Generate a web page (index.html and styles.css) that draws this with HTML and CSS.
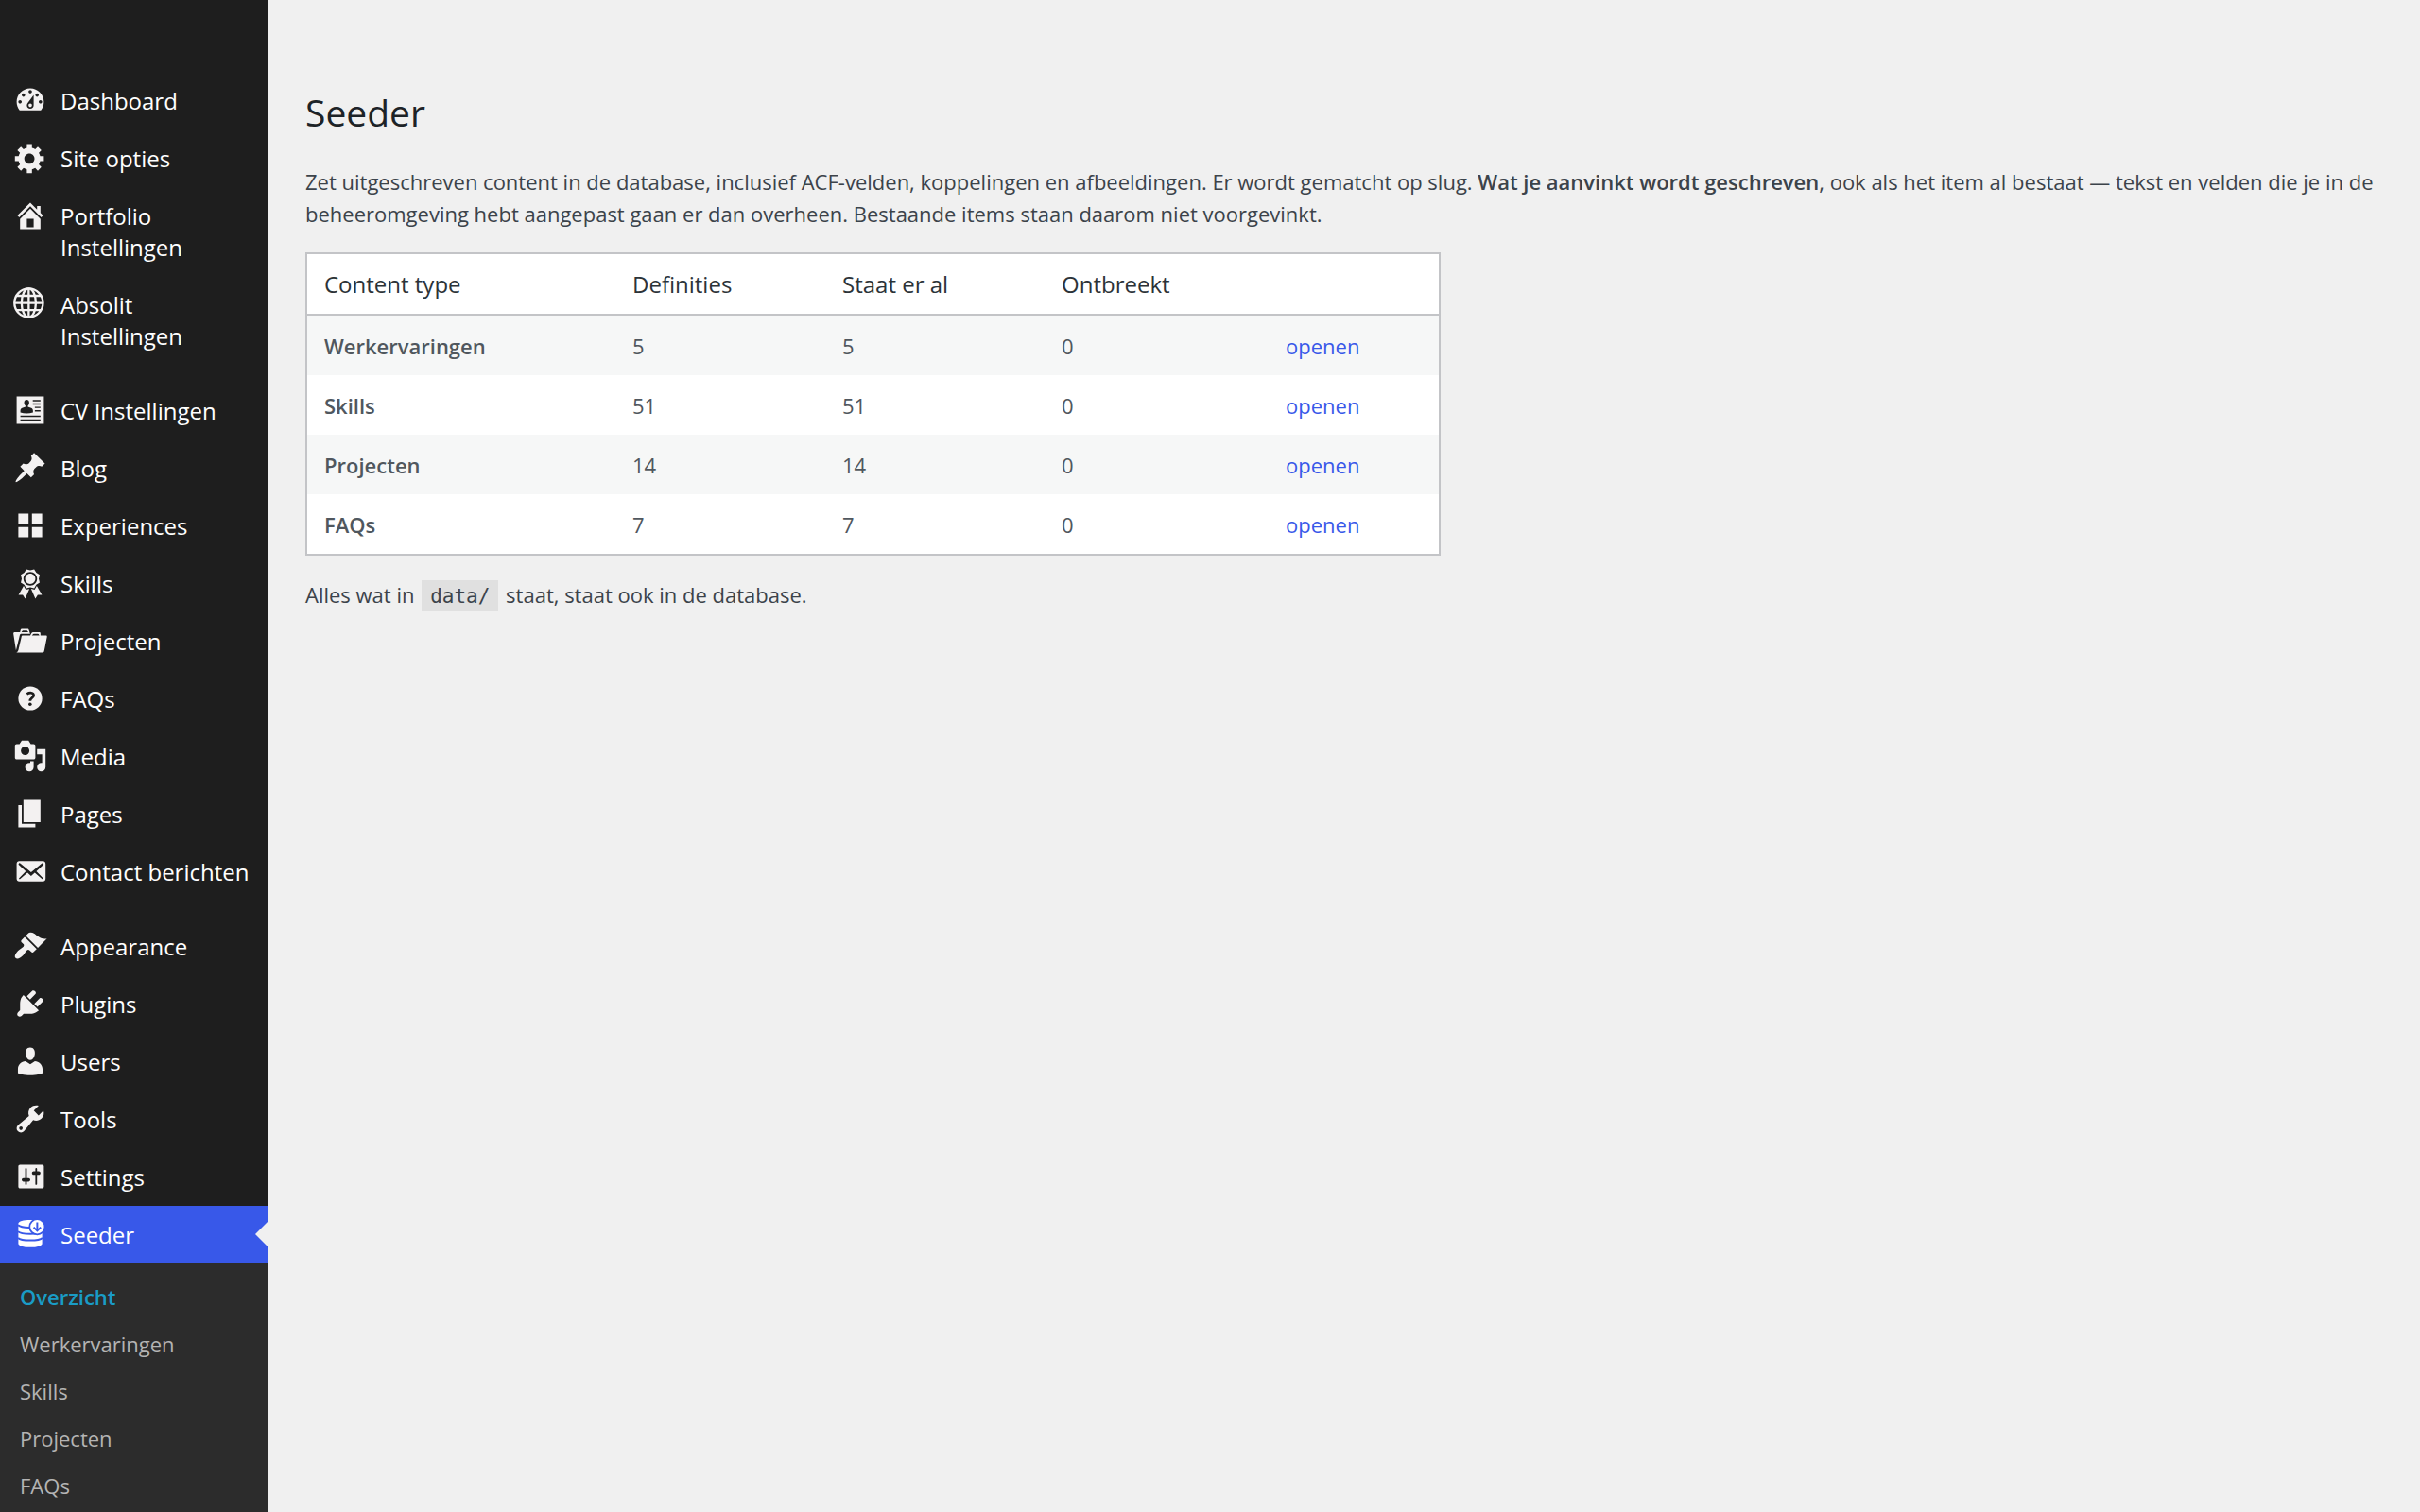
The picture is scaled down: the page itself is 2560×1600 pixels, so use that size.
FILE: index.html
```html
<!doctype html>
<html lang="nl">
  <head>
    <meta charset="utf-8">
    <meta name="viewport" content="width=device-width">
    <title>Seeder</title>
    <link rel="stylesheet" href="styles.css">
  </head>
  <body>
    <nav class="adminmenu">
      <ul class="menu">
        <li><a class="menu-item" href="#dashboard">
          <svg class="icon" viewBox="0 0 20 20"><path d="M3.76 16h12.48c1.1-1.37 1.76-3.11 1.76-5 0-4.42-3.58-8-8-8s-8 3.58-8 8c0 1.89.66 3.63 1.76 5zM10 4c.55 0 1 .45 1 1s-.45 1-1 1-1-.45-1-1 .45-1 1-1zM6 6c.55 0 1 .45 1 1s-.45 1-1 1-1-.45-1-1 .45-1 1-1zm8 0c.55 0 1 .45 1 1s-.45 1-1 1-1-.45-1-1 .45-1 1-1zm-5.37 5.55L12 7v6c0 1.1-.9 2-2 2s-2-.9-2-2c0-.57.24-1.08.63-1.45zM4 10c.55 0 1 .45 1 1s-.45 1-1 1-1-.45-1-1 .45-1 1-1zm12 0c.55 0 1 .45 1 1s-.45 1-1 1-1-.45-1-1 .45-1 1-1zm-5 3c0-.55-.45-1-1-1s-1 .45-1 1 .45 1 1 1 1-.45 1-1z"/></svg>
          <span>Dashboard</span></a></li>
        <li><a class="menu-item" href="#site-opties">
          <svg class="icon" viewBox="0 0 20 20"><path d="M18 12h-2.18c-.17.7-.44 1.35-.81 1.93l1.54 1.54-2.1 2.1-1.54-1.54c-.58.36-1.23.63-1.91.79V19H8v-2.18c-.68-.16-1.33-.43-1.91-.79l-1.54 1.54-2.12-2.12 1.54-1.54c-.36-.58-.63-1.23-.79-1.91H1V9.03h2.17c.16-.7.44-1.35.8-1.94L2.43 5.55l2.1-2.1 1.54 1.54c.58-.37 1.24-.64 1.93-.81V2h3v2.18c.68.16 1.33.43 1.91.79l1.54-1.54 2.12 2.12-1.54 1.54c.36.59.64 1.24.8 1.94H18V12zm-8.5 1.5c1.66 0 3-1.34 3-3s-1.34-3-3-3-3 1.34-3 3 1.34 3 3 3z"/></svg>
          <span>Site opties</span></a></li>
        <li><a class="menu-item" href="#portfolio">
          <svg class="icon" viewBox="0 0 20 20"><path d="M16 8.5l1.53 1.53-1.06 1.06L10 4.6l-6.47 6.49-1.06-1.06L10 2.5l4 4v-2h2v4zm-6-2.46l6 5.99V18H4v-5.97zM12 17v-5H8v5h4z"/></svg>
          <span>Portfolio Instellingen</span></a></li>
        <li><a class="menu-item" href="#absolit">
          <svg class="icon" viewBox="0 0 20 20"><g class="line"><circle cx="9.1" cy="9.2" r="8.4"/><ellipse cx="9.1" cy="9.2" rx="4.2" ry="8.4"/><path d="M9.1.8v16.8M.7 9.2h16.8M2 5h14.2M2 13.4h14.2"/></g></svg>
          <span>Absolit Instellingen</span></a></li>
        <li class="separator"></li>
        <li><a class="menu-item" href="#cv">
          <svg class="icon" viewBox="0 0 20 20"><path d="M2 2h16v16H2zM7.9 3.9c-.9 0-1.5.7-1.5 1.7 0 .8.3 1.5.8 1.9v.5l-2 .8c-.7.3-1 .9-1 1.8v.8c2.4.7 5 .7 7.4 0v-.8c0-.9-.3-1.5-1-1.8l-2-.8v-.5c.5-.4.8-1.1.8-1.9 0-1-.6-1.7-1.5-1.7zM11.5 4v.8H16V4zm0 2v.8H16V6zm1.2 2v.8H16V8zm0 2v.8H16V10zM4.2 13.2v.8H16v-.8zm0 2.2v.8H16v-.8z"/></svg>
          <span>CV Instellingen</span></a></li>
        <li><a class="menu-item" href="#blog">
          <svg class="icon" viewBox="0 0 20 20"><path d="M10.44 3.02l1.82-1.82 6.36 6.35-1.83 1.82c-1.05-.68-2.48-.57-3.41.36l-.75.75c-.92.93-1.04 2.35-.35 3.41l-1.83 1.82-2.41-2.41-2.8 2.79c-.42.42-3.38 2.71-3.8 2.29s1.86-3.39 2.28-3.81l2.79-2.79L4.1 9.36l1.83-1.82c1.05.69 2.48.57 3.4-.36l.75-.75c.93-.92 1.05-2.35.36-3.41z"/></svg>
          <span>Blog</span></a></li>
        <li><a class="menu-item" href="#experiences">
          <svg class="icon" viewBox="0 0 20 20"><path d="M9 9V3H3v6h6zm8 0V3h-6v6h6zm-8 8v-6H3v6h6zm8 0v-6h-6v6h6z"/></svg>
          <span>Experiences</span></a></li>
        <li><a class="menu-item" href="#skills">
          <svg class="icon" viewBox="0 0 20 20"><path d="M4.46 5.16L5 7.46l-.54 2.29 2.01 1.24L7.7 13l2.3-.54 2.3.54 1.23-2.01 2.01-1.24L15 7.46l.54-2.3-2-1.24-1.24-2.01-2.3.55-2.29-.54-1.25 2zm5.55 6.34c-2.21 0-4-1.79-4-4 0-2.2 1.79-4 4-4 2.2 0 4 1.8 4 4 0 2.21-1.8 4-4 4zm-.02-1C8.33 10.5 7 9.16 7 7.5c0-1.65 1.33-3 2.99-3S13 5.85 13 7.5c0 1.66-1.35 3-3.01 3zm3.84 1.1l-1.28 2.24-2.08-.47L13 19.2l1.4-2.2h2.5zm-7.7.07l1.25 2.25 2.13-.51L7 19.2 5.6 17H3.1z"/></svg>
          <span>Skills</span></a></li>
        <li><a class="menu-item" href="#projecten">
          <svg class="icon" viewBox="0 0 20 20"><path d="M4 5H.78c-.37 0-.74.32-.69.84l1.56 9.99S3.5 8.47 3.86 6.7c.11-.53.61-.7.98-.7H10s-.7-2.08-.77-2.31C9.11 3.25 8.89 3 8.45 3H5.14c-.36 0-.7.23-.8.64C4.25 4.04 4 5 4 5zm4.88 0h-4s.42-1 .87-1h2.13c.48 0 1 1 1 1zM2.67 16.25c-.31.47-.76.75-1.26.75h15.73c.54 0 .92-.31 1.03-.83.44-2.19 1.68-8.44 1.68-8.44.07-.5-.3-.73-.62-.73H16V5.53c0-.16-.26-.53-.66-.53h-3.76c-.52 0-.87.58-.87.58L10 7H5.59c-.32 0-.63.19-.69.5 0 0-1.59 6.7-1.72 7.33-.07.37-.22.99-.51 1.42zM15.38 7H11s.58-1 1.13-1h2.29c.71 0 .96 1 .96 1z"/></svg>
          <span>Projecten</span></a></li>
        <li><a class="menu-item" href="#faqs">
          <svg class="icon" viewBox="0 0 20 20"><circle cx="10" cy="10" r="7"/><path class="cut" d="M8 7.4c1.7-1 4-.9 4 .8 0 1.5-2.1 1.6-2.1 3.3"/><circle class="hole" cx="9.9" cy="13.5" r="1"/></svg>
          <span>FAQs</span></a></li>
        <li><a class="menu-item" href="#media">
          <svg class="icon" viewBox="0 0 20 20"><path d="M13 11V4c0-.55-.45-1-1-1h-1.67L9 1H5L3.67 3H2c-.55 0-1 .45-1 1v7c0 .55.45 1 1 1h10c.55 0 1-.45 1-1zM7 4.5c1.38 0 2.5 1.12 2.5 2.5S8.38 9.5 7 9.5 4.5 8.38 4.5 7 5.62 4.5 7 4.5zM14 6h5v10.5c0 1.38-1.12 2.5-2.5 2.5S14 17.88 14 16.5s1.12-2.5 2.5-2.5c.17 0 .34.02.5.05V9h-3V6zm-4 8.05V13h2v3.5c0 1.38-1.12 2.5-2.5 2.5S7 17.88 7 16.5 8.12 14 9.5 14c.17 0 .34.02.5.05z"/></svg>
          <span>Media</span></a></li>
        <li><a class="menu-item" href="#pages">
          <svg class="icon" viewBox="0 0 20 20"><path d="M6 15V2h10v13H6zm-1 1h8v2H3V5h2v11z"/></svg>
          <span>Pages</span></a></li>
        <li><a class="menu-item" href="#contact">
          <svg class="icon" viewBox="0 0 20 20"><path d="M19 14.5v-9c0-.83-.67-1.5-1.5-1.5H3.49c-.83 0-1.5.67-1.5 1.5v9c0 .83.67 1.5 1.5 1.5H17.5c.83 0 1.5-.67 1.5-1.5zm-1.31-9.11c.33.33.15.67-.03.84L13.6 9.95l3.9 4.06c.12.14.2.36.06.51-.13.16-.43.15-.56.05l-4.37-3.73-2.14 1.95-2.13-1.95-4.37 3.73c-.13.1-.43.11-.56-.05-.14-.15-.06-.37.06-.51l3.9-4.06-4.06-3.72c-.18-.17-.36-.51-.03-.84s.67-.17.95.07l6.24 5.04 6.25-5.04c.28-.24.62-.4.95-.07z"/></svg>
          <span>Contact berichten</span></a></li>
        <li class="separator"></li>
        <li><a class="menu-item" href="#appearance">
          <svg class="icon" viewBox="0 0 20 20"><path d="M14.48 11.06L7.41 3.99l1.5-1.5c.5-.56 2.3-.47 3.51.32 1.21.8 1.43 1.28 2.91 2.1 1.18.64 2.45 1.26 4.45.85zm-.71.71L6.7 4.7 4.93 6.47c-.39.39-.39 1.02 0 1.41l1.06 1.06c.39.39.39 1.03 0 1.42-.6.6-1.43 1.11-2.21 1.69-.35.26-.7.53-1.01.84C1.43 14.23.4 16.08 1.4 17.07c.99 1 2.84-.03 4.18-1.36.31-.31.58-.66.85-1.02.57-.78 1.08-1.61 1.69-2.21.39-.39 1.02-.39 1.41 0l1.06 1.06c.39.39 1.02.39 1.41 0z"/></svg>
          <span>Appearance</span></a></li>
        <li><a class="menu-item" href="#plugins">
          <svg class="icon" viewBox="0 0 20 20"><path d="M13.11 4.36L9.87 7.6 8 5.73l3.24-3.24c.35-.34 1.05-.2 1.56.32.52.51.66 1.21.31 1.55zm-8 1.77l.91-1.12 9.01 9.01-1.19.84c-.71.71-2.63 1.16-3.82 1.16H6.14L4.9 17.26c-.59.59-1.54.59-2.12 0-.59-.58-.59-1.53 0-2.12l1.24-1.24v-3.88c0-1.13.4-3.19 1.09-3.89zm7.26 3.97l3.24-3.24c.34-.35 1.04-.21 1.55.31.52.51.66 1.21.31 1.55l-3.24 3.25z"/></svg>
          <span>Plugins</span></a></li>
        <li><a class="menu-item" href="#users">
          <svg class="icon" viewBox="0 0 20 20"><path d="M10 9.25c-2.27 0-2.73-3.44-2.73-3.44C7 4.02 7.82 2 9.97 2c2.16 0 2.98 2.02 2.71 3.81 0 0-.41 3.44-2.68 3.44zm0 2.57L12.72 10c2.39 0 4.52 2.33 4.52 4.53v2.49s-3.65 1.13-7.24 1.13c-3.65 0-7.24-1.13-7.24-1.13v-2.49c0-2.25 1.94-4.48 4.47-4.48z"/></svg>
          <span>Users</span></a></li>
        <li><a class="menu-item" href="#tools">
          <svg class="icon" viewBox="0 0 20 20"><path d="M16.68 9.77c-1.34 1.34-3.3 1.67-4.95.99l-5.41 6.52c-.99.99-2.59.99-3.58 0s-.99-2.59 0-3.57l6.52-5.42c-.68-1.65-.35-3.61.99-4.95 1.28-1.28 3.12-1.62 4.72-1.06l-2.89 2.89 2.82 2.82 2.86-2.87c.53 1.58.18 3.39-1.08 4.65zM3.81 16.21c.4.39 1.04.39 1.43 0 .4-.4.4-1.04 0-1.43-.39-.4-1.03-.4-1.43 0-.39.39-.39 1.03 0 1.43z"/></svg>
          <span>Tools</span></a></li>
        <li><a class="menu-item" href="#settings">
          <svg class="icon" viewBox="0 0 20 20"><path d="M18 16V4c0-.55-.45-1-1-1H4c-.55 0-1 .45-1 1v12c0 .55.45 1 1 1h13c.55 0 1-.45 1-1zM8 11h1c.55 0 1 .45 1 1s-.45 1-1 1H8v1.5c0 .28-.22.5-.5.5s-.5-.22-.5-.5V13H6c-.55 0-1-.45-1-1s.45-1 1-1h1V5.5c0-.28.22-.5.5-.5s.5.22.5.5V11zm5-2h-1c-.55 0-1-.45-1-1s.45-1 1-1h1V5.5c0-.28.22-.5.5-.5s.5.22.5.5V7h1c.55 0 1 .45 1 1s-.45 1-1 1h-1v5.5c0 .28-.22.5-.5.5s-.5-.22-.5-.5V9z"/></svg>
          <span>Settings</span></a></li>
        <li><a class="menu-item current" href="#seeder">
          <svg class="icon" viewBox="0 0 20 20"><path d="M3 3.8C3 2.5 6 1.7 10 1.7s7 .8 7 2.1v11.7c0 1.3-3 2.2-7 2.2s-7-.9-7-2.2z"/><path class="cut" d="M2.8 4.6c1.5 1.3 4.5 1.6 7.4 1.5M2.8 8.4c2 1.9 12.4 1.9 14.4 0M2.8 12.2c2 1.9 12.4 1.9 14.4 0"/><circle class="badge" cx="14.1" cy="5.7" r="4.5"/><path class="cut" d="M14.1 3v4.7M12 5.9l2.1 2.1 2.1-2.1"/></svg>
          <span>Seeder</span></a></li>
      </ul>
      <ul class="submenu">
        <li><a class="active" href="#overzicht">Overzicht</a></li>
        <li><a href="#werkervaringen">Werkervaringen</a></li>
        <li><a href="#seed-skills">Skills</a></li>
        <li><a href="#seed-projecten">Projecten</a></li>
        <li><a href="#seed-faqs">FAQs</a></li>
      </ul>
    </nav>
    <main class="wrap">
      <h1>Seeder</h1>
      <p>Zet uitgeschreven content in de database, inclusief ACF-velden, koppelingen en afbeeldingen. Er wordt gematcht op slug. <strong>Wat je aanvinkt wordt geschreven</strong>, ook als het item al bestaat — tekst en velden die je in de beheeromgeving hebt aangepast gaan er dan overheen. Bestaande items staan daarom niet voorgevinkt.</p>
      <table class="widefat">
        <thead>
          <tr><th class="col-type">Content type</th><th class="col-def">Definities</th><th class="col-present">Staat er al</th><th class="col-missing">Ontbreekt</th><th></th></tr>
        </thead>
        <tbody>
          <tr><td><strong>Werkervaringen</strong></td><td>5</td><td>5</td><td>0</td><td><a href="#werkervaringen">openen</a></td></tr>
          <tr><td><strong>Skills</strong></td><td>51</td><td>51</td><td>0</td><td><a href="#seed-skills">openen</a></td></tr>
          <tr><td><strong>Projecten</strong></td><td>14</td><td>14</td><td>0</td><td><a href="#seed-projecten">openen</a></td></tr>
          <tr><td><strong>FAQs</strong></td><td>7</td><td>7</td><td>0</td><td><a href="#seed-faqs">openen</a></td></tr>
        </tbody>
      </table>
      <p>Alles wat in <code>data/</code> staat, staat ook in de database.</p>
    </main>
  </body>
</html>
```
FILE: styles.css
```css
* { box-sizing: border-box; }
body { display: flex; min-height: 100vh; margin: 0; background: #f0f0f0; color: #3c434a; font: 22px/34px "Open Sans", "Noto Sans", sans-serif; }
ul { margin: 0; padding: 0; list-style: none; }
a { color: #3858e9; text-decoration: none; }
strong { font-weight: 600; }

/* sidebar */
.adminmenu { flex: none; display: flex; flex-direction: column; width: 284px; padding-top: 76px; background: #1e1e1e; }
.menu-item { position: relative; display: flex; gap: 14px; padding: 14px 20px 14px 14px; color: #fff; font-size: 24px; line-height: 33px; }
.separator { height: 18px; }
.icon { flex: none; width: 36px; height: 36px; margin: -2px 0 -1px; fill: #f3f1f1; fill-rule: evenodd; }
.icon .line { fill: none; stroke: #f3f1f1; stroke-width: 1.3; }
.icon .cut { fill: none; stroke: #1e1e1e; stroke-width: 1.5; }
.icon .hole { fill: #1e1e1e; }
.current { background: #3858e9; }
.current .icon { fill: #fff; }
.current .icon .cut { stroke: #3858e9; stroke-width: 1.1; }
.current .icon .badge { stroke: #3858e9; stroke-width: 1; }
.current::after { content: ""; position: absolute; right: 0; top: 16px; border: 14px solid transparent; border-left-width: 0; border-right-color: #f0f0f0; }
.submenu { flex: 1; padding: 10px 0 2px; background: #2c2c2c; }
.submenu a { display: block; padding: 8px 21px; color: #b4b4b4; }
.submenu .active { color: #1a9cc6; font-weight: 600; }

/* content */
.wrap { flex: 1; padding: 91px 36px 0 39px; }
h1 { margin: 0; color: #1d2327; font-size: 39px; font-weight: 400; line-height: 56px; }
p { margin: 28px 0 24px; }
.widefat { width: 1201px; border: 2px solid #c3c4c7; border-spacing: 0; background: #fff; color: #50575e; }
.widefat th { height: 65px; padding: 0 18px; border-bottom: 2px solid #c3c4c7; color: #2c3338; font-size: 24px; font-weight: 400; text-align: left; }
.widefat td { height: 63px; padding: 0 18px; }
.widefat tbody tr:nth-child(odd) { background: #f6f7f7; }
.widefat + p { margin-top: 24px; }
.col-type { width: 326px; }
.col-def { width: 222px; }
.col-present { width: 232px; }
.col-missing { width: 237px; }
code { margin: 0 2px; padding: 5px 9px 4px; background: #e0e0e0; font: 21px "DejaVu Sans Mono", monospace; }
```
